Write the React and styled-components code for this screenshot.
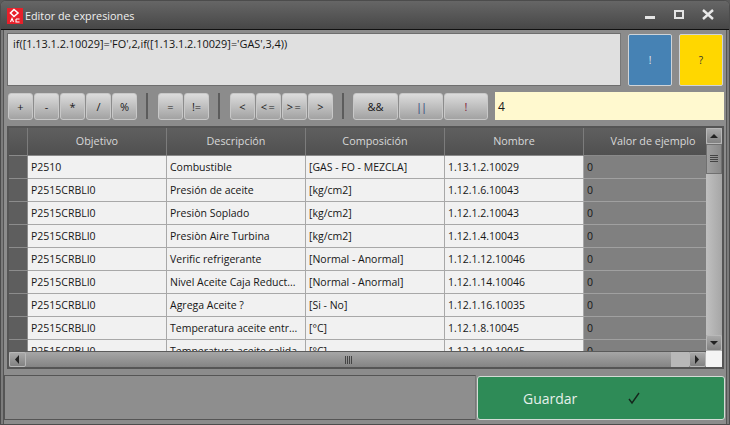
import React from "react";
import styled, { createGlobalStyle } from "styled-components";

const GlobalStyle = createGlobalStyle`
  html, body {
    margin: 0;
    padding: 0;
    background: #5a5a5a;
  }
  * {
    box-sizing: border-box;
  }
`;

const Window = styled.div`
  width: 730px;
  height: 425px;
  display: flex;
  flex-direction: column;
  background: #7c7c7c;
  border: 1px solid #4c4c4c;
  border-radius: 6px 6px 0 0;
  font-family: "Open Sans", "Noto Sans", sans-serif;
  overflow: hidden;
`;

const TitleBar = styled.div`
  height: 29px;
  flex: none;
  display: flex;
  align-items: center;
  padding: 0 0 0 6px;
  background: linear-gradient(#666666, #474747);
  border-bottom: 1px solid #111111;
`;

const Logo = styled.svg`
  width: 16px;
  height: 16px;
  margin-right: 2px;
  margin-top: 1px;
`;

const Title = styled.span`
  flex: 1;
  font-size: 10.8px;
  color: #f0f0f0;
`;

const WinButtons = styled.div`
  display: flex;
  align-items: center;
  gap: 11px;
  padding-right: 12px;
  color: #e8e8e8;
`;

const WinIcon = styled.svg`
  width: 18px;
  height: 14px;
  display: block;
`;

const Body = styled.div`
  flex: 1;
  display: flex;
  flex-direction: column;
  margin: 0 2px;
  padding-top: 3px;
  background: #8c8c8c;
  border-left: 1px solid #555;
  border-right: 1px solid #555;
`;

const FormulaRow = styled.div`
  display: flex;
  height: 53px;
  padding-left: 3px;
`;

const Formula = styled.div`
  width: 614px;
  height: 53px;
  padding: 2px 5px;
  background: #e0e0e0;
  border: 1px solid #6e6e6e;
  border-right-color: #777;
  font-size: 10.9px;
  line-height: 15px;
  color: #141414;
`;

const ActionButton = styled.div`
  width: 44px;
  height: 52px;
  margin-top: 1px;
  margin-left: 7px;
  display: flex;
  align-items: center;
  justify-content: center;
  background: ${(p) => p.$bg};
  border: 1px solid #cfd4d8;
  border-radius: 2px;
  font-size: 10px;
  color: ${(p) => p.$fg};
`;

const Toolbar = styled.div`
  display: flex;
  align-items: center;
  height: 28px;
  margin-top: 6px;
  padding-left: 4px;
`;

const OpButton = styled.div`
  width: ${(p) => p.$w || 25}px;
  height: 27px;
  margin-right: 1px;
  display: flex;
  align-items: center;
  justify-content: center;
  background: linear-gradient(#dcdcdc, #a2a2a2);
  border: 1px solid #c8c8c8;
  border-radius: 3px;
  font-size: 11px;
  letter-spacing: ${(p) => p.$spacing || 0}px;
  color: ${(p) => p.$fg || "#1a1a1a"};
`;

const Separator = styled.div`
  width: 2px;
  height: 26px;
  margin: 0 ${(p) => p.$right || 10}px 0 8px;
  background: #5c5c5c;
`;

const ResultInput = styled.div`
  width: 229px;
  height: 28px;
  margin-left: 6px;
  padding-left: 3px;
  display: flex;
  align-items: center;
  background: #fff9cf;
  font-size: 12px;
  color: #1a1a1a;
`;

const GridFrame = styled.div`
  width: 717px;
  height: 243px;
  margin-top: 6px;
  margin-left: 3px;
  display: grid;
  grid-template-columns: 697px 16px;
  grid-template-rows: 223px 16px;
  background: #f0f0f0;
  border: 2px solid #555;
`;

const TableArea = styled.div`
  overflow: hidden;
`;

const Row = styled.div`
  display: grid;
  grid-template-columns: 19px 139px 139px 139px 139px 139px;
  height: ${(p) => (p.$header ? 28 : 23)}px;
`;

const HeaderCell = styled.div`
  display: flex;
  align-items: center;
  justify-content: center;
  padding-bottom: 2px;
  background: linear-gradient(#5f5f5f, #505050);
  border-right: 1px solid #7c7c7c;
  border-bottom: 1px solid #8a8a8a;
  font-size: 10.8px;
  color: #d8d8d8;
  white-space: nowrap;
`;

const RowHeader = styled.div`
  background: #5e5e5e;
  border-right: 1px solid #8c8c8c;
  border-bottom: 1px solid #8c8c8c;
`;

const Cell = styled.div`
  display: flex;
  align-items: center;
  padding-left: 3px;
  background: ${(p) => (p.$sample ? "#808080" : "#f1f1f1")};
  border-right: 1px solid ${(p) => (p.$sample ? "#808080" : "#a8a8a8")};
  border-bottom: 1px solid ${(p) => (p.$sample ? "#a0a0a0" : "#a8a8a8")};
  font-size: 10.5px;
  color: #161616;
  white-space: nowrap;
  overflow: hidden;
`;

const VScroll = styled.div`
  display: flex;
  flex-direction: column;
  background: #b0b0b0;
`;

const HScroll = styled.div`
  display: flex;
  align-items: stretch;
  background: linear-gradient(#a6a6a6, #848484);
  border-top: 1px solid #5a5a5a;
`;

const ScrollButton = styled.div`
  width: ${(p) => (p.$h ? "17px" : "16px")};
  height: ${(p) => (p.$h ? "15px" : "16px")};
  flex: none;
  display: flex;
  align-items: center;
  justify-content: center;
  background: linear-gradient(#a8a8a8, #828282);
  border: 1px solid #b8b8b8;
  border-radius: 2px;
`;

const VThumb = styled.div`
  height: 30px;
  display: flex;
  align-items: center;
  justify-content: center;
  background: linear-gradient(90deg, #a0a0a0, #8a8a8a);
  border: 1px solid #707070;
`;

const VTrack = styled.div`
  flex: 1;
  background: linear-gradient(90deg, #c0c0c0, #a6a6a6);
`;

const HThumb = styled.div`
  flex: 1;
  display: flex;
  align-items: center;
  justify-content: center;
`;

const HTrack = styled.div`
  width: 18px;
  background: #b8b8b8;
`;

const Corner = styled.div`
  background: #f4f4f4;
`;

const Footer = styled.div`
  display: flex;
  height: 46px;
  margin-top: 6px;
`;

const FooterPanel = styled.div`
  width: 472px;
  height: 45px;
  background: #8e8e8e;
  border: 1px solid #555;
  border-right-color: #777;
`;

const SaveButton = styled.div`
  width: 248px;
  height: 44px;
  margin-top: 1px;
  margin-left: 1px;
  display: flex;
  align-items: center;
  padding-left: 45px;
  background: #2e8b57;
  border: 1px solid #d4dcd6;
  border-radius: 3px;
  font-size: 14px;
  color: #e6f0ea;
`;

const Check = styled.svg`
  width: 14px;
  height: 13px;
  margin-left: 50px;
`;

const columns = ["Objetivo", "Descripción", "Composición", "Nombre", "Valor de ejemplo"];

const rows = [
  ["P2510", "Combustible", "[GAS - FO - MEZCLA]", "1.13.1.2.10029"],
  ["P2515CRBLI0", "Presión de aceite", "[kg/cm2]", "1.12.1.6.10043"],
  ["P2515CRBLI0", "Presiòn Soplado", "[kg/cm2]", "1.12.1.2.10043"],
  ["P2515CRBLI0", "Presiòn Aire Turbina", "[kg/cm2]", "1.12.1.4.10043"],
  ["P2515CRBLI0", "Verific refrigerante", "[Normal - Anormal]", "1.12.1.12.10046"],
  ["P2515CRBLI0", "Nivel Aceite Caja Reduct...", "[Normal - Anormal]", "1.12.1.14.10046"],
  ["P2515CRBLI0", "Agrega Aceite ?", "[Si - No]", "1.12.1.16.10035"],
  ["P2515CRBLI0", "Temperatura aceite entr...", "[°C]", "1.12.1.8.10045"],
  ["P2515CRBLI0", "Temperatura aceite salida", "[°C]", "1.12.1.10.10045"],
];

const Arrow = ({ dir }) => {
  const points = {
    up: "1,6 9,6 5,2",
    down: "1,2 9,2 5,6",
    left: "6,0 6,9 2,4.5",
    right: "2,0 2,9 6,4.5",
  }[dir];
  return (
    <svg width="10" height="9" viewBox="0 0 10 9">
      <polygon points={points} fill="#222" />
    </svg>
  );
};

const Grip = ({ vertical }) => (
  <svg width="8" height="8" viewBox="0 0 8 8">
    {[0, 2, 4, 6].map((n) =>
      vertical ? (
        <rect key={n} x="0" y={n} width="8" height="1" fill="#444" />
      ) : (
        <rect key={n} x={n} y="0" width="1" height="8" fill="#444" />
      )
    )}
  </svg>
);

const App = () => {
  return (
    <>
      <GlobalStyle />
      <Window>
        <TitleBar>
          <Logo viewBox="0 0 16 16">
            <rect width="16" height="16" fill="#e8202a" />
            <path d="M7 1.5 L11 5 L7 8.5 L3.5 5 Z" fill="none" stroke="#fff" strokeWidth="1.6" />
            <path d="M3.5 14 L5 10.5 L6.5 14 M9 11 H12.5 M9 11 V14 H12.5" fill="none" stroke="#fff" strokeWidth="1.1" />
          </Logo>
          <Title>Editor de expresiones</Title>
          <WinButtons>
            <WinIcon viewBox="0 0 18 14">
              <rect x="4" y="8" width="10" height="3" fill="#e4e4e4" />
            </WinIcon>
            <WinIcon viewBox="0 0 18 14">
              <rect x="5" y="3" width="8" height="7" fill="none" stroke="#e4e4e4" strokeWidth="2" />
            </WinIcon>
            <WinIcon viewBox="0 0 18 14">
              <path d="M4 2 L14 11 M14 2 L4 11" stroke="#e8e8e8" strokeWidth="2.4" />
            </WinIcon>
          </WinButtons>
        </TitleBar>
        <Body>
          <FormulaRow>
            <Formula>if([1.13.1.2.10029]='FO',2,if([1.13.1.2.10029]='GAS',3,4))</Formula>
            <ActionButton $bg="#4682b4" $fg="#e8e8e8">!</ActionButton>
            <ActionButton $bg="#ffd700" $fg="#333">?</ActionButton>
          </FormulaRow>
          <Toolbar>
            <OpButton>+</OpButton>
            <OpButton>-</OpButton>
            <OpButton>*</OpButton>
            <OpButton>/</OpButton>
            <OpButton>%</OpButton>
            <Separator />
            <OpButton>=</OpButton>
            <OpButton>!=</OpButton>
            <Separator />
            <OpButton>&lt;</OpButton>
            <OpButton $spacing={1.5}>&lt;=</OpButton>
            <OpButton $spacing={1.5}>&gt;=</OpButton>
            <OpButton>&gt;</OpButton>
            <Separator $right={9} />
            <OpButton $w={45}>&amp;&amp;</OpButton>
            <OpButton $w={44} $fg="#2c3c78" $spacing={-1}>||</OpButton>
            <OpButton $w={44} $fg="#80203a">!</OpButton>
            <ResultInput>4</ResultInput>
          </Toolbar>
          <GridFrame>
            <TableArea>
              <Row $header>
                <HeaderCell />
                {columns.map((name) => (
                  <HeaderCell key={name}>{name}</HeaderCell>
                ))}
              </Row>
              {rows.map((row, i) => (
                <Row key={i}>
                  <RowHeader />
                  {row.map((text, j) => (
                    <Cell key={j}>{text}</Cell>
                  ))}
                  <Cell $sample>0</Cell>
                </Row>
              ))}
            </TableArea>
            <VScroll>
              <ScrollButton><Arrow dir="up" /></ScrollButton>
              <VThumb><Grip vertical /></VThumb>
              <VTrack />
              <ScrollButton><Arrow dir="down" /></ScrollButton>
            </VScroll>
            <HScroll>
              <ScrollButton $h><Arrow dir="left" /></ScrollButton>
              <HThumb><Grip /></HThumb>
              <HTrack />
              <ScrollButton $h><Arrow dir="right" /></ScrollButton>
            </HScroll>
            <Corner />
          </GridFrame>
          <Footer>
            <FooterPanel />
            <SaveButton>
              Guardar
              <Check viewBox="0 0 14 13">
                <path d="M2 7 L5 11 L12 1" fill="none" stroke="#14261c" strokeWidth="1.4" />
              </Check>
            </SaveButton>
          </Footer>
        </Body>
      </Window>
    </>
  );
};

export default App;
